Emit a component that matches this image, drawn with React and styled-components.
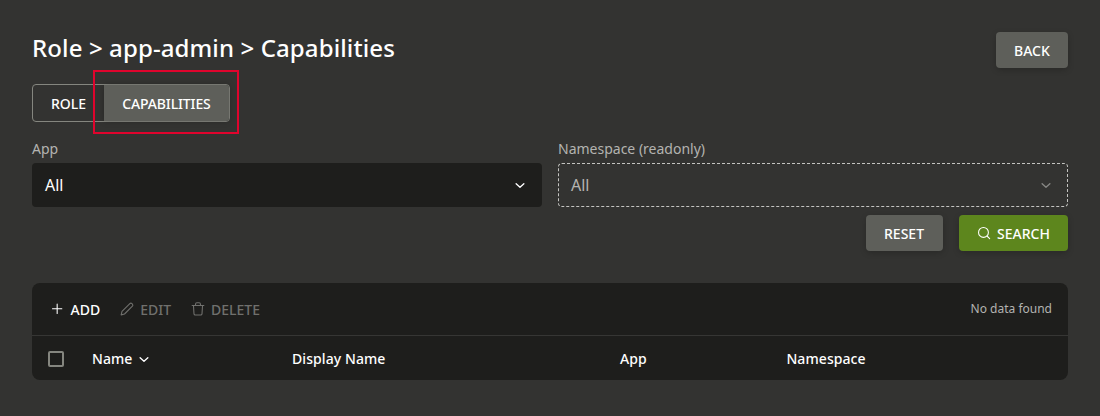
import React from 'react';
import styled, { createGlobalStyle, css } from 'styled-components';

const GlobalStyle = createGlobalStyle`
  *, *::before, *::after { box-sizing: border-box; }
  body {
    margin: 0;
    min-height: 100vh;
    background: #333331;
    color: #fff;
    font-family: "Noto Sans", "Liberation Sans", sans-serif;
    font-size: 14px;
  }
`;

const Page = styled.main`
  padding: 32px;
`;

const Header = styled.header`
  display: flex;
  justify-content: space-between;
  align-items: flex-start;
  height: 36px;
`;

const Title = styled.h1`
  margin: 0;
  font-size: 24px;
  font-weight: 500;
  line-height: 32px;
  letter-spacing: 0.11px;
`;

const Button = styled.button`
  display: inline-flex;
  align-items: center;
  gap: 5px;
  width: ${(p) => p.$width}px;
  height: 36px;
  padding: 1px 0 0 ${(p) => (p.$primary ? 17 : 18)}px;
  border: 0;
  border-radius: 4px;
  background: ${(p) => (p.$primary ? '#5d861d' : '#5e5f5a')};
  color: #fff;
  font: 500 14px/20px "Noto Sans", sans-serif;
  text-transform: uppercase;
  box-shadow: 0 2px 6px rgba(0, 0, 0, 0.2);
`;

const Tabs = styled.nav`
  position: relative;
  display: flex;
  width: 198px;
  height: 38px;
  margin-top: 16px;
  border: 1px solid #85867f;
  border-radius: 4px;
`;

const Tab = styled.button`
  flex: 0 0 ${(p) => p.$width}px;
  padding: 1px 0 0;
  border: 0;
  background: transparent;
  color: #fff;
  font: 500 14px/20px "Noto Sans", sans-serif;
  text-transform: uppercase;
  ${(p) =>
    p.$active &&
    css`
      background: #5e5f5a;
      border-radius: 0 3px 3px 0;
      box-shadow: 0 0 6px rgba(0, 0, 0, 0.25);
      letter-spacing: -0.13px;
    `}
`;

const Highlight = styled.div`
  position: absolute;
  top: -15px;
  left: 60px;
  width: 146px;
  height: 64px;
  border: 2px solid #e0042d;
  pointer-events: none;
`;

const Filters = styled.section`
  display: grid;
  grid-template-columns: 1fr 1fr;
  gap: 16px;
  margin-top: 17px;
`;

const Label = styled.div`
  height: 24px;
  color: #b3b3b0;
  line-height: 20px;
`;

const Select = styled.div`
  display: flex;
  align-items: center;
  justify-content: space-between;
  height: 44px;
  padding: 0 14px 0 13px;
  border-radius: 4px;
  background: #1e1e1c;
  font-size: 16px;
  ${(p) =>
    p.$readonly &&
    css`
      padding: 0 13px 0 12px;
      border: 1px dashed #c4c4c1;
      background: transparent;
      color: #b3b3b0;
      svg { opacity: 0.65; }
    `}
`;

const Actions = styled.div`
  display: flex;
  justify-content: flex-end;
  gap: 16px;
  margin-top: 8px;
`;

const Panel = styled.section`
  margin-top: 32px;
  border-radius: 8px;
  background: #1e1e1c;
`;

const Toolbar = styled.div`
  display: flex;
  align-items: center;
  gap: 18.5px;
  height: 53px;
  padding: 0 16px 0 17px;
  border-bottom: 1px solid #363634;
`;

const Tool = styled.button`
  display: inline-flex;
  align-items: center;
  gap: 5.5px;
  padding: 1px 0 0;
  border: 0;
  background: transparent;
  color: ${(p) => (p.$muted ? '#70706d' : '#fff')};
  font: 500 14px/20px "Noto Sans", sans-serif;
  text-transform: uppercase;
`;

const Status = styled.span`
  margin-left: auto;
  color: #b3b3b0;
  font-size: 12px;
  line-height: 18px;
`;

const HeadRow = styled.div`
  display: grid;
  grid-template-columns: 44px 200px 328px 166.4px 1fr;
  align-items: center;
  height: 44px;
  padding: 2px 16px 0;
  font-weight: 500;
  line-height: 20px;
  letter-spacing: 0.08px;
`;

const Column = styled.span`
  display: flex;
  align-items: center;
  gap: 3.5px;
`;

const Checkbox = styled.span`
  width: 16px;
  height: 16px;
  border: 2px solid #85867f;
  border-radius: 2px;
`;

const Svg = styled.svg`
  flex: none;
  width: 16px;
  height: 16px;
  margin-top: -1px;
  fill: none;
  stroke: currentColor;
  stroke-width: ${(p) => p.$weight || 1.6};
  stroke-linecap: round;
  stroke-linejoin: round;
`;

const paths = {
  search: 'M16.5 16.5 20.5 20.5M3.8 11.2a7.4 7.4 0 1 0 14.8 0a7.4 7.4 0 0 0-14.8 0Z',
  plus: 'M5.25 11.7h14M12.25 4.7v14',
  chevron: 'm6.2 10 5.8 5.5 5.8-5.5',
  pencil:
    'M3.2 20.8 4.5 15.7 16.3 3.9a2.2 2.2 0 0 1 3.1 0l.7.7a2.2 2.2 0 0 1 0 3.1L8.3 19.5Z',
  trash:
    'M3.2 6.7h17.6M8.3 6.5V4.7a2 2 0 0 1 2-2h3.4a2 2 0 0 1 2 2v1.8M5.2 6.9l.8 12.4a2 2 0 0 0 2 1.8h8a2 2 0 0 0 2-1.8l.8-12.4',
};

const Icon = ({ name, weight }) => (
  <Svg viewBox="0 0 24 24" $weight={weight} aria-hidden="true">
    <path d={paths[name]} />
  </Svg>
);

export default function App() {
  return (
    <>
      <GlobalStyle />
      <Page>
        <Header>
          <Title>Role &gt; app-admin &gt; Capabilities</Title>
          <Button $width={72}>Back</Button>
        </Header>
        <Tabs>
          <Tab $width={71}>Role</Tab>
          <Tab $width={125} $active>Capabilities</Tab>
          <Highlight />
        </Tabs>
        <Filters>
          <div>
            <Label>App</Label>
            <Select>All<Icon name="chevron" weight={2} /></Select>
          </div>
          <div>
            <Label>Namespace (readonly)</Label>
            <Select $readonly>All<Icon name="chevron" weight={2} /></Select>
          </div>
        </Filters>
        <Actions>
          <Button $width={77}>Reset</Button>
          <Button $width={109} $primary><Icon name="search" />Search</Button>
        </Actions>
        <Panel>
          <Toolbar>
            <Tool><Icon name="plus" />Add</Tool>
            <Tool $muted><Icon name="pencil" />Edit</Tool>
            <Tool $muted><Icon name="trash" />Delete</Tool>
            <Status>No data found</Status>
          </Toolbar>
          <HeadRow>
            <Checkbox />
            <Column>Name<Icon name="chevron" weight={2} /></Column>
            <Column>Display Name</Column>
            <Column>App</Column>
            <Column>Namespace</Column>
          </HeadRow>
        </Panel>
      </Page>
    </>
  );
}
